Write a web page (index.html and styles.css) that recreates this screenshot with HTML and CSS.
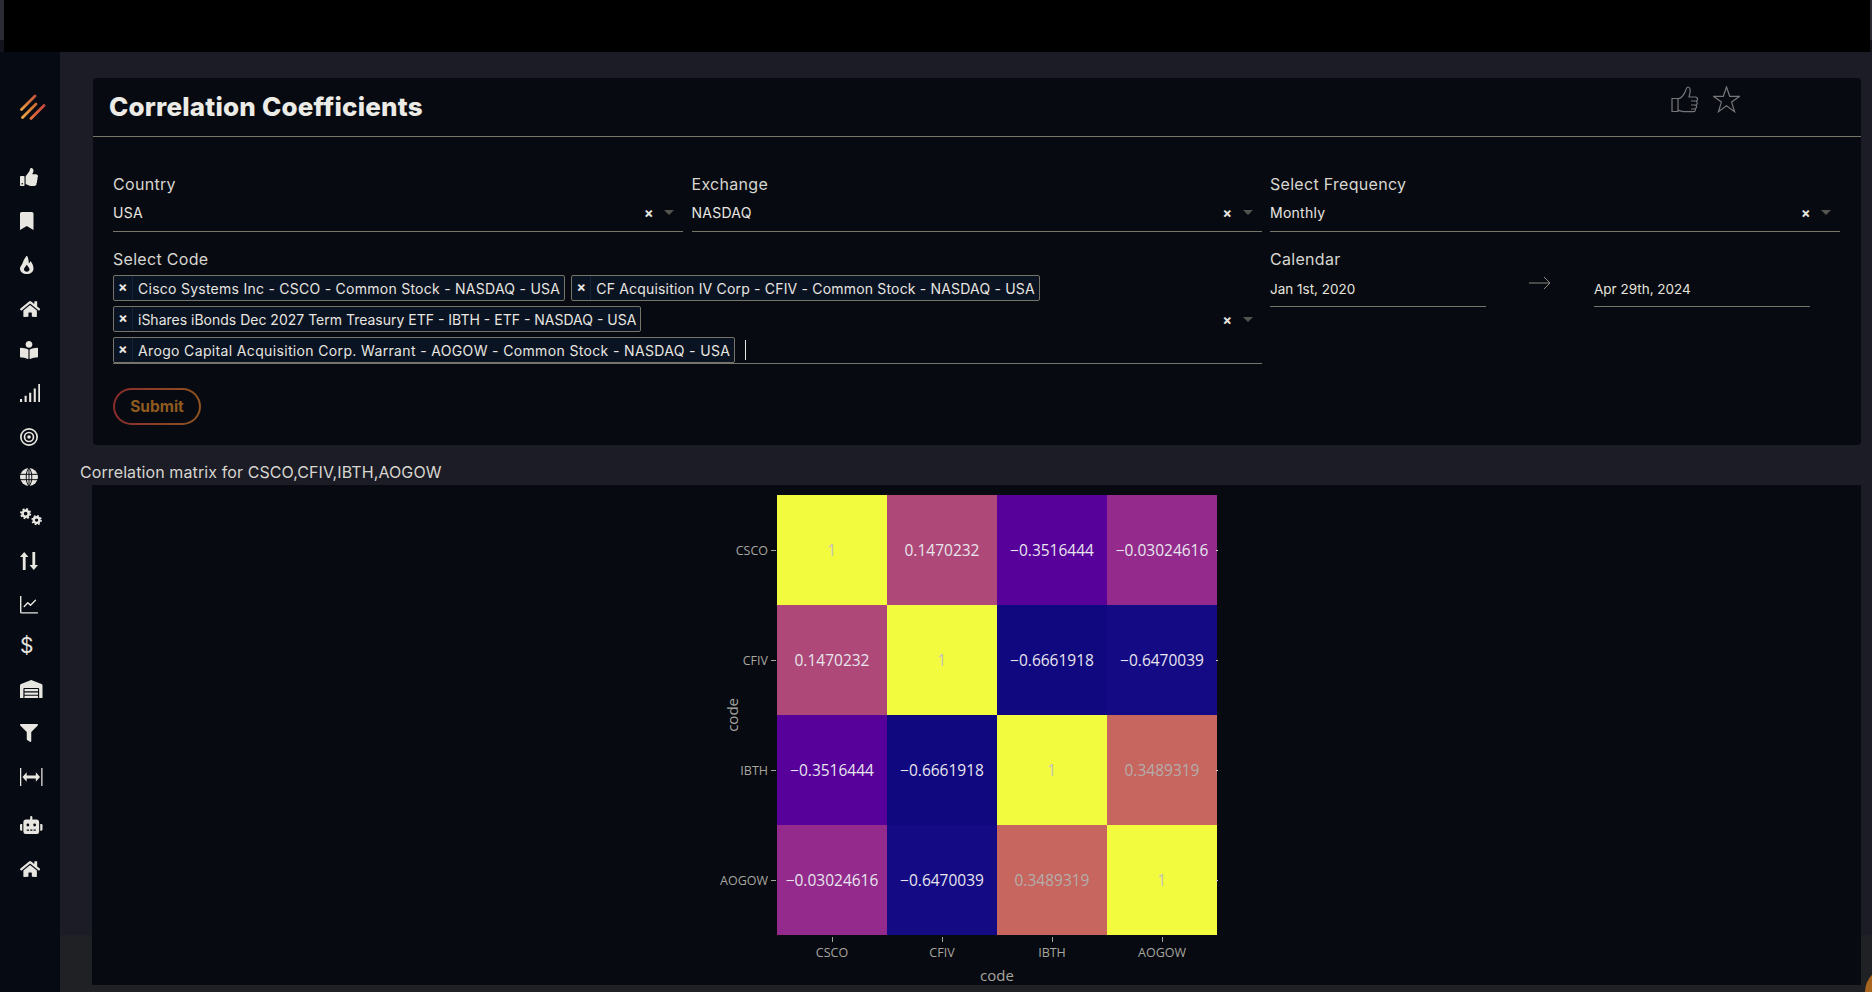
FILE: index.html
```html
<!DOCTYPE html>
<html lang="en">
<head>
    <meta charset="UTF-8">
    <meta name="viewport" content="width=device-width, initial-scale=1.0">
    <title>Correlation Coefficients</title>
    <link rel="stylesheet" href="styles.css">
</head>
<body>
    <div class="topbar">
        <div class="topbar-edge"></div>
        <div class="topbar-black"></div>
        <div class="topbar-edge"></div>
    </div>

    <div class="app">
        <nav class="sidebar">
            <svg class="logo" viewBox="0 0 26 26" fill="none" stroke-width="2.800" stroke-linecap="round">
                <defs>
                    <linearGradient id="logoA" gradientUnits="userSpaceOnUse" x1="1" y1="16" x2="15" y2="2"><stop offset="0" stop-color="#f0a040"/><stop offset="1" stop-color="#c4553c"/></linearGradient>
                    <linearGradient id="logoB" gradientUnits="userSpaceOnUse" x1="2" y1="24" x2="16" y2="10"><stop offset="0" stop-color="#f0aa44"/><stop offset="1" stop-color="#d06a30"/></linearGradient>
                    <linearGradient id="logoC" gradientUnits="userSpaceOnUse" x1="11" y1="25" x2="24" y2="12"><stop offset="0" stop-color="#e0703c"/><stop offset="1" stop-color="#c8483c"/></linearGradient>
                </defs>
                <path d="M1.500 15.500 15 2" stroke="url(#logoA)"/>
                <path d="M2.500 23.500 16 10" stroke="url(#logoB)"/>
                <path d="M11 24.500 24 11.500" stroke="url(#logoC)"/>
            </svg>
            <ul class="nav-list">
                <li class="nav-item"><svg viewBox="0 0 512 512"><path d="M104 224H24c-13.255 0-24 10.745-24 24v240c0 13.255 10.745 24 24 24h80c13.255 0 24-10.745 24-24V248c0-13.255-10.745-24-24-24zM64 472c-13.255 0-24-10.745-24-24s10.745-24 24-24 24 10.745 24 24-10.745 24-24 24zM384 81.452c0 42.416-25.97 66.208-33.277 94.548h101.723c33.397 0 59.397 27.746 59.553 58.098.084 17.938-7.546 37.249-19.439 49.197l-.11.11c9.836 23.337 8.237 56.037-9.308 79.469 8.681 25.895-.069 57.704-16.382 74.757 4.298 17.598 2.244 32.575-6.148 44.632C440.202 511.587 389.616 512 346.839 512l-2.845-.001c-48.287-.017-87.806-17.598-119.56-31.725-15.957-7.099-36.821-15.887-52.651-16.178-6.54-.12-11.783-5.457-11.783-11.998v-213.77c0-3.2 1.282-6.271 3.558-8.521 39.614-39.144 56.648-80.587 89.117-113.111 14.804-14.832 20.188-37.236 25.393-58.902C282.515 39.293 291.817 0 312 0c24 0 72 8 72 81.452z"/></svg></li>
                <li class="nav-item"><svg viewBox="0 0 384 512"><path d="M0 512V48C0 21.49 21.49 0 48 0h288c26.51 0 48 21.49 48 48v464L192 400 0 512z"/></svg></li>
                <li class="nav-item"><svg viewBox="0 0 384 512"><path d="M216 24c0-23-30-32-44-12C70 154 96 180 40 264 14 302 0 330 0 352c0 88 84 160 192 160s192-72 192-160c0-70-44-160-88-208-8 34-24 58-48 72 8-60-8-130-32-192zM192 448c-44 0-80-30-80-68 0-34 36-70 80-130 44 60 80 96 80 130 0 38-36 68-80 68z"/></svg></li>
                <li class="nav-item"><svg viewBox="0 0 576 512"><path d="M280.37 148.26L96 300.11V464a16 16 0 0 0 16 16l112.06-.29a16 16 0 0 0 15.92-16V368a16 16 0 0 1 16-16h64a16 16 0 0 1 16 16v95.64a16 16 0 0 0 16 16.05L464 480a16 16 0 0 0 16-16V300L295.67 148.26a12.19 12.19 0 0 0-15.3 0zM571.6 251.47L488 182.56V44.05a12 12 0 0 0-12-12h-56a12 12 0 0 0-12 12v72.61L318.47 43a48 48 0 0 0-61 0L4.34 251.47a12 12 0 0 0-1.6 16.9l25.5 31A12 12 0 0 0 45.15 301l235.22-193.74a12.19 12.19 0 0 1 15.3 0L530.9 301a12 12 0 0 0 16.9-1.6l25.5-31a12 12 0 0 0-1.7-16.93z"/></svg></li>
                <li class="nav-item nav-tight"><svg viewBox="0 0 512 512"><path d="M352 96c0-53.02-42.98-96-96-96s-96 42.98-96 96 42.98 96 96 96 96-42.98 96-96zM233.59 241.1c-59.33-36.32-155.43-46.3-203.79-49.05C13.55 191.13 0 203.51 0 219.14v222.8c0 14.33 11.59 26.28 26.49 27.05 43.66 2.29 131.99 10.68 193.04 41.43 9.37 4.72 20.48-1.71 20.48-11.87V252.56c-.01-4.67-2.32-8.95-6.42-11.46zm248.61-49.05c-48.35 2.74-144.46 12.73-203.78 49.05-4.1 2.51-6.41 6.96-6.41 11.63v245.79c0 10.19 11.14 16.63 20.54 11.9 61.04-30.72 149.32-39.11 192.97-41.4 14.9-.78 26.49-12.73 26.49-27.06V219.14c-.01-15.63-13.56-28.01-29.81-27.09z"/></svg></li>
                <li class="nav-item nav-snug"><svg viewBox="0 0 580 512"><path d="M0 424h60v88H0zM130 336h60v176h-60zM260 248h60v264h-60zM390 128h60v384h-60zM520 0h60v512h-60z"/></svg></li>
                <li class="nav-item"><svg viewBox="0 0 512 512"><circle cx="256" cy="256" r="232" fill="none" stroke="#e8e6e0" stroke-width="48"/><circle cx="256" cy="256" r="128" fill="none" stroke="#e8e6e0" stroke-width="48"/><circle cx="256" cy="256" r="52"/></svg></li>
                <li class="nav-item nav-tighter"><svg viewBox="0 0 512 512"><circle cx="256" cy="256" r="256"/><path d="M0 180h512M0 332h512M256 0v512M256 0C150 100 150 412 256 512M256 0c106 100 106 412 0 512" fill="none" stroke="#060a12" stroke-width="28"/></svg></li>
                <li class="nav-item nav-tighter"><svg viewBox="0 0 640 512"><circle cx="160" cy="160" r="88" fill="none" stroke="#e8e6e0" stroke-width="72"/><circle cx="160" cy="160" r="134" fill="none" stroke="#e8e6e0" stroke-width="50" stroke-dasharray="52 53.300"/><circle cx="472" cy="344" r="82" fill="none" stroke="#e8e6e0" stroke-width="68"/><circle cx="472" cy="344" r="126" fill="none" stroke="#e8e6e0" stroke-width="46" stroke-dasharray="50 49"/></svg></li>
                <li class="nav-item"><svg viewBox="0 0 512 512"><path d="M120 0 240 140H160V512H80V140H0zM392 512 272 372h80V0h80v372h80z"/></svg></li>
                <li class="nav-item"><svg viewBox="0 0 512 512"><path d="M20 16V456a24 24 0 0 0 24 24H496" fill="none" stroke="#e8e6e0" stroke-width="40" stroke-linecap="round"/><path d="M120 300 220 190l80 70 140-140" fill="none" stroke="#e8e6e0" stroke-width="40" stroke-linecap="round" stroke-linejoin="round"/></svg></li>
                <li class="nav-item nav-tighter nav-dollar">$</li>
                <li class="nav-item"><svg viewBox="0 0 640 512"><path d="M504 352H136.4c-4.4 0-8 3.6-8 8l-.1 48c0 4.4 3.6 8 8 8H504c4.4 0 8-3.6 8-8v-48c0-4.4-3.6-8-8-8zm0 96H136.1c-4.4 0-8 3.6-8 8l-.1 48c0 4.4 3.6 8 8 8h368c4.4 0 8-3.6 8-8v-48c0-4.4-3.6-8-8-8zm0-192H136.6c-4.4 0-8 3.6-8 8l-.1 48c0 4.4 3.6 8 8 8H504c4.4 0 8-3.6 8-8v-48c0-4.4-3.6-8-8-8zm106.5-139L338.4 3.7a48.15 48.15 0 0 0-36.9 0L29.5 117C11.7 124.5 0 141.9 0 161.3V504c0 4.4 3.6 8 8 8h80c4.4 0 8-3.6 8-8V256c0-17.6 14.6-32 32.6-32h382.8c18 0 32.6 14.4 32.6 32v248c0 4.4 3.6 8 8 8h80c4.4 0 8-3.6 8-8V161.3c0-19.400-11.700-36.800-29.500-44.300z"/></svg></li>
                <li class="nav-item"><svg viewBox="0 0 512 512"><path d="M487.976 0H24.028C2.71 0-8.047 25.866 7.058 40.971L192 225.941V432c0 7.831 3.821 15.17 10.237 19.662l80 55.98C298.02 518.69 320 507.493 320 487.98V225.941l184.947-184.97C520.021 25.896 509.338 0 487.976 0z"/></svg></li>
                <li class="nav-item"><svg viewBox="0 0 640 512"><path d="M0 0h36v512H0zM604 0h36v512h-36zM190 120v90h260v-90l120 136-120 136v-90H190v90L70 256z"/></svg></li>
                <li class="nav-item nav-loose"><svg viewBox="0 0 640 512"><path d="M32,224H64V416H32A31.96166,31.96166,0,0,1,0,384V256A31.96166,31.96166,0,0,1,32,224Zm512-48V448a64.06328,64.06328,0,0,1-64,64H160a64.06328,64.06328,0,0,1-64-64V176a79.974,79.974,0,0,1,80-80H288V32a32,32,0,0,1,64,0V96H464A79.974,79.974,0,0,1,544,176ZM264,256a40,40,0,1,0-40,40A39.997,39.997,0,0,0,264,256Zm-8,128H192v32h64Zm96,0H288v32h64ZM456,256a40,40,0,1,0-40,40A39.997,39.997,0,0,0,456,256Zm-8,128H384v32h64ZM640,256V384a31.96166,31.96166,0,0,1-32,32H576V224h32A31.96166,31.96166,0,0,1,640,256Z"/></svg></li>
                <li class="nav-item"><svg viewBox="0 0 576 512"><path d="M280.37 148.26L96 300.11V464a16 16 0 0 0 16 16l112.06-.29a16 16 0 0 0 15.92-16V368a16 16 0 0 1 16-16h64a16 16 0 0 1 16 16v95.64a16 16 0 0 0 16 16.05L464 480a16 16 0 0 0 16-16V300L295.67 148.26a12.19 12.19 0 0 0-15.3 0zM571.6 251.47L488 182.56V44.05a12 12 0 0 0-12-12h-56a12 12 0 0 0-12 12v72.61L318.47 43a48 48 0 0 0-61 0L4.34 251.47a12 12 0 0 0-1.6 16.9l25.5 31A12 12 0 0 0 45.15 301l235.22-193.74a12.19 12.19 0 0 1 15.3 0L530.9 301a12 12 0 0 0 16.9-1.6l25.5-31a12 12 0 0 0-1.7-16.93z"/></svg></li>
            </ul>
        </nav>

        <main class="content">
            <section class="card">
                <div class="card-header">
                    <h1>Correlation Coefficients</h1>
                    <div class="card-actions">
                        <svg viewBox="0 0 27 27"><path d="M1 12.500h6v13H1zM7 13c3-1 6-4 7.500-8 .6-2 1-4 2.500-4 2 0 2.500 3 2 5.500L18 11h6.500c1.500 0 2 1.200 2 2.200 0 1-.7 1.800-1.700 2 1 .3 1.500 1 1.500 2 0 1-.7 1.700-1.700 2 .8.400 1.200 1.100 1 2-.2.800-.8 1.400-1.600 1.600.4.500.5 1.100.3 1.700-.3.700-1 1.200-2 1.200H13c-2.500 0-4-1-6-1.700M20 15h4.500M20 19h4.500M20 23h3.500" fill="none"/></svg>
                        <svg viewBox="0 0 27 27"><path d="M13.500 1l3.200 9.300h9.800l-7.900 5.800 3 9.600-8.100-5.900-8.100 5.900 3-9.600L.5 10.300h9.800z" fill="none"/></svg>
                    </div>
                </div>

                <form class="filters" action="#" method="POST">
                    <div class="field">
                        <label>Country</label>
                        <div class="select">
                            <span class="select-value">USA</span>
                            <span class="select-clear">×</span><span class="select-caret"></span>
                        </div>
                    </div>
                    <div class="field">
                        <label>Exchange</label>
                        <div class="select">
                            <span class="select-value">NASDAQ</span>
                            <span class="select-clear">×</span><span class="select-caret"></span>
                        </div>
                    </div>
                    <div class="field">
                        <label>Select Frequency</label>
                        <div class="select">
                            <span class="select-value">Monthly</span>
                            <span class="select-clear">×</span><span class="select-caret"></span>
                        </div>
                    </div>
                    <div class="field field-wide">
                        <label>Select Code</label>
                        <div class="select select-multi">
                            <div class="tags">
                                <span class="tag"><span class="tag-x">×</span><span class="tag-text">Cisco Systems Inc - CSCO - Common Stock - NASDAQ - USA</span></span>
                                <span class="tag tag-cfiv"><span class="tag-x">×</span><span class="tag-text">CF Acquisition IV Corp - CFIV - Common Stock - NASDAQ - USA</span></span>
                                <span class="tag tag-ibth"><span class="tag-x">×</span><span class="tag-text">iShares iBonds Dec 2027 Term Treasury ETF - IBTH - ETF - NASDAQ - USA</span></span>
                                <span class="tag tag-aogow"><span class="tag-x">×</span><span class="tag-text">Arogo Capital Acquisition Corp. Warrant - AOGOW - Common Stock - NASDAQ - USA</span></span>
                                <span class="cursor"></span>
                            </div>
                            <span class="select-clear">×</span><span class="select-caret"></span>
                        </div>
                    </div>
                    <div class="field">
                        <label>Calendar</label>
                        <div class="dates">
                            <span class="date">Jan 1st, 2020</span>
                            <svg class="date-arrow" viewBox="0 0 22 14"><path d="M0 7h21M15 1l6 6-6 6" fill="none"/></svg>
                            <span class="date">Apr 29th, 2024</span>
                        </div>
                    </div>
                    <button class="submit" type="button">Submit</button>
                </form>
            </section>

            <h2 class="matrix-title">Correlation matrix for CSCO,CFIV,IBTH,AOGOW</h2>

            <section class="plot">
                <div class="matrix">
                    <div class="axis-title-y">code</div>

                    <div class="y-label">CSCO</div>
                    <div class="cell c-one">1</div>
                    <div class="cell c-pink">0.1470232</div>
                    <div class="cell c-violet">−0.3516444</div>
                    <div class="cell c-purple cell-end">−0.03024616</div>

                    <div class="y-label">CFIV</div>
                    <div class="cell c-pink">0.1470232</div>
                    <div class="cell c-one">1</div>
                    <div class="cell c-navy">−0.6661918</div>
                    <div class="cell c-indigo cell-end">−0.6470039</div>

                    <div class="y-label">IBTH</div>
                    <div class="cell c-violet">−0.3516444</div>
                    <div class="cell c-navy">−0.6661918</div>
                    <div class="cell c-one">1</div>
                    <div class="cell c-salmon cell-end">0.3489319</div>

                    <div class="y-label">AOGOW</div>
                    <div class="cell c-purple">−0.03024616</div>
                    <div class="cell c-indigo">−0.6470039</div>
                    <div class="cell c-salmon">0.3489319</div>
                    <div class="cell c-one cell-end">1</div>

                    <div class="x-label x-first">CSCO</div>
                    <div class="x-label">CFIV</div>
                    <div class="x-label">IBTH</div>
                    <div class="x-label">AOGOW</div>

                    <div class="axis-title-x">code</div>
                </div>
            </section>
            <div class="chat-bubble"></div>
        </main>
    </div>
</body>
</html>
```

FILE: styles.css
```css
* {
    box-sizing: border-box;
}
html, body {
    height: 100%;
}
body {
    margin: 0;
    height: 992px;
    overflow: hidden;
    background-color: #060a12;
    color: #e6e4de;
    font-family: "Inter", "Liberation Sans", sans-serif;
}

/* top strip */
.topbar {
    display: flex;
    height: 52px;
    background-color: #14151c;
}
.topbar-edge {
    width: 4px;
    height: 40px;
    background-color: #2c2d34;
}
.topbar-edge:last-child {
    width: 2px;
}
.topbar-black {
    flex: 1;
    background-color: #000;
}

.app {
    display: flex;
    height: 940px;
}

/* sidebar */
.sidebar {
    width: 60px;
    flex-shrink: 0;
    padding: 42px 0 0 20px;
    background-color: #060a12;
}
.logo {
    display: block;
    width: 26px;
    height: 26px;
}
.nav-list {
    display: flex;
    flex-direction: column;
    gap: 24px;
    list-style: none;
    margin: 47px 0 0;
    padding: 0;
}
.nav-item {
    display: flex;
    align-items: center;
    height: 20px;
    color: #e8e6e0;
}
.nav-item svg {
    height: 18px;
    width: auto;
    fill: #e8e6e0;
}
.nav-snug {
    margin-top: -1px;
}
.nav-tight {
    margin-top: -3px;
}
.nav-tighter {
    margin-top: -4px;
}
.nav-loose {
    margin-top: 4px;
}
.nav-dollar {
    font-size: 21px;
}

/* main column */
.content {
    position: relative;
    flex: 1;
    overflow: hidden;
    padding: 26px 11px 0 33px;
    background: linear-gradient(#1b1c25 883px, #202124 883px);
}
.card {
    height: 367px;
    background-color: #070a11;
    border-radius: 4px;
}
.card-header {
    display: flex;
    justify-content: space-between;
    align-items: center;
    height: 59px;
    padding: 0 121px 2px 16px;
    border-bottom: 1px solid #77746a;
}
.card-header h1 {
    margin: 0;
    font-size: 26px;
    font-weight: 800;
    letter-spacing: .2px;
    color: #ecebe6;
}
.card-actions {
    display: flex;
    gap: 15px;
    align-self: flex-start;
    padding-top: 8px;
}
.card-actions svg {
    width: 27px;
    height: 27px;
    stroke: #77777a;
    stroke-width: 1.200;
}

/* filters */
.filters {
    display: grid;
    grid-template-columns: repeat(3, 570px);
    column-gap: 8.500px;
    row-gap: 15px;
    padding: 35px 0 0 20px;
    align-items: start;
}
.field label {
    display: block;
    font-size: 16px;
    letter-spacing: .3px;
    line-height: 24px;
    color: #d8d6d0;
}
.field-wide {
    grid-column: span 2;
}
.select {
    display: flex;
    align-items: center;
    height: 36px;
    padding-bottom: 2px;
    border-bottom: 1px solid #77746a;
    font-size: 14px;
    letter-spacing: .26px;
    color: #e8e6e0;
}
.select-multi {
    height: auto;
    margin-top: 4px;
    padding-bottom: 0;
}
.select-value {
    flex: 1;
}
.select-clear {
    width: 10px;
    margin-right: 10px;
    text-align: center;
    font-size: 14px;
    font-weight: 700;
}
.select-caret {
    width: 0;
    height: 0;
    margin-right: 9px;
    border-left: 5px solid transparent;
    border-right: 5px solid transparent;
    border-top: 5px solid #55554f;
}
.select-multi .select-clear {
    margin-left: 4px;
}
.tags {
    flex: 1;
    display: flex;
    flex-wrap: wrap;
    align-items: center;
    gap: 5px 6px;
}
.tag {
    display: inline-flex;
    align-items: center;
    height: 26px;
    border: 1px solid #77746a;
    border-radius: 2px;
    background-color: #0a1322;
}
.tag-cfiv {
    letter-spacing: .18px;
}
.tag-ibth {
    letter-spacing: 0;
}
.tag-aogow {
    letter-spacing: .35px;
}
.tag-x {
    width: 19px;
    height: 100%;
    line-height: 21px;
    text-align: center;
    font-weight: 700;
    font-size: 14px;
    border-right: 1px solid #13233a;
}
.tag-text {
    padding: 0 4px 0 5px;
    white-space: nowrap;
}
.cursor {
    width: 1px;
    height: 20px;
    margin-left: 4px;
    background-color: #e8e6e0;
}
.dates {
    display: flex;
    justify-content: space-between;
    align-items: flex-start;
    width: 540px;
}
.date {
    width: 216px;
    height: 36px;
    padding-top: 8px;
    border-bottom: 1px solid #77746a;
    font-size: 13.500px;
    line-height: 20px;
}
.date-arrow {
    width: 22px;
    height: 14px;
    margin-top: 5px;
    stroke: #8a887f;
}
.submit {
    grid-column: 1;
    justify-self: start;
    width: 88px;
    height: 37px;
    margin-top: 9px;
    padding: 0;
    border: 2px solid transparent;
    border-radius: 19px;
    background: linear-gradient(#070a11, #070a11) padding-box, linear-gradient(90deg, #8a2c2c, #8f5320) border-box;
    color: #8f5a1f;
    font-family: inherit;
    font-size: 15.500px;
    font-weight: 700;
}

/* correlation matrix */
.matrix-title {
    height: 40px;
    margin: 0 0 0 -13px;
    padding-top: 17px;
    font-size: 16px;
    letter-spacing: .1px;
    line-height: 20px;
    font-weight: 400;
    color: #d8d6d0;
}
.plot {
    height: 500px;
    margin-left: -1px;
    padding: 10px 0 0 628px;
    background-color: #070a11;
}
.matrix {
    position: relative;
    display: grid;
    grid-template-columns: 57px repeat(4, 110px);
    grid-template-rows: repeat(4, 110px) 30px 20px;
    width: 497px;
    font-family: "Open Sans", "Liberation Sans", sans-serif;
}
.axis-title-y {
    position: absolute;
    left: 2px;
    top: 203px;
    writing-mode: vertical-rl;
    transform: rotate(180deg);
    font-size: 15px;
    color: #a8a69f;
}
.y-label {
    grid-column: 1;
    position: relative;
    justify-self: end;
    align-self: center;
    padding-right: 9px;
    font-size: 12.500px;
    color: #a8a69f;
}
.y-label::after {
    content: "";
    position: absolute;
    right: 1px;
    top: 50%;
    width: 5px;
    height: 1px;
    background-color: #a8a69f;
}
.cell {
    display: flex;
    align-items: center;
    justify-content: center;
    font-size: 15.500px;
    font-weight: 500;
    color: #e8e6ee;
}
.cell-end {
    position: relative;
}
.cell-end::after {
    content: "";
    position: absolute;
    right: -1px;
    top: 50%;
    width: 2px;
    height: 1px;
    background-color: #d0cec8;
}
.c-one {
    background-color: #f3fb3f;
    color: #c2c0b8;
}
.c-pink {
    background-color: #ae4878;
}
.c-violet {
    background-color: #57009a;
}
.c-purple {
    background-color: #932a8c;
}
.c-navy {
    background-color: #10087f;
}
.c-indigo {
    background-color: #140a83;
}
.c-salmon {
    background-color: #c7655f;
    color: #b3aeaa;
}
.x-label {
    position: relative;
    padding-top: 9px;
    text-align: center;
    font-size: 12.500px;
    color: #a8a69f;
}
.x-first {
    grid-column: 2;
}
.x-label::before {
    content: "";
    position: absolute;
    left: 50%;
    top: 2px;
    width: 1px;
    height: 5px;
    background-color: #a8a69f;
}
.axis-title-x {
    grid-column: 2 / 6;
    text-align: center;
    font-size: 15px;
    color: #a8a69f;
}

/* bottom right corner bubble */
.chat-bubble {
    position: absolute;
    right: -43px;
    bottom: -25px;
    width: 50px;
    height: 50px;
    border-radius: 50%;
    background-color: #a8651f;
}
```
